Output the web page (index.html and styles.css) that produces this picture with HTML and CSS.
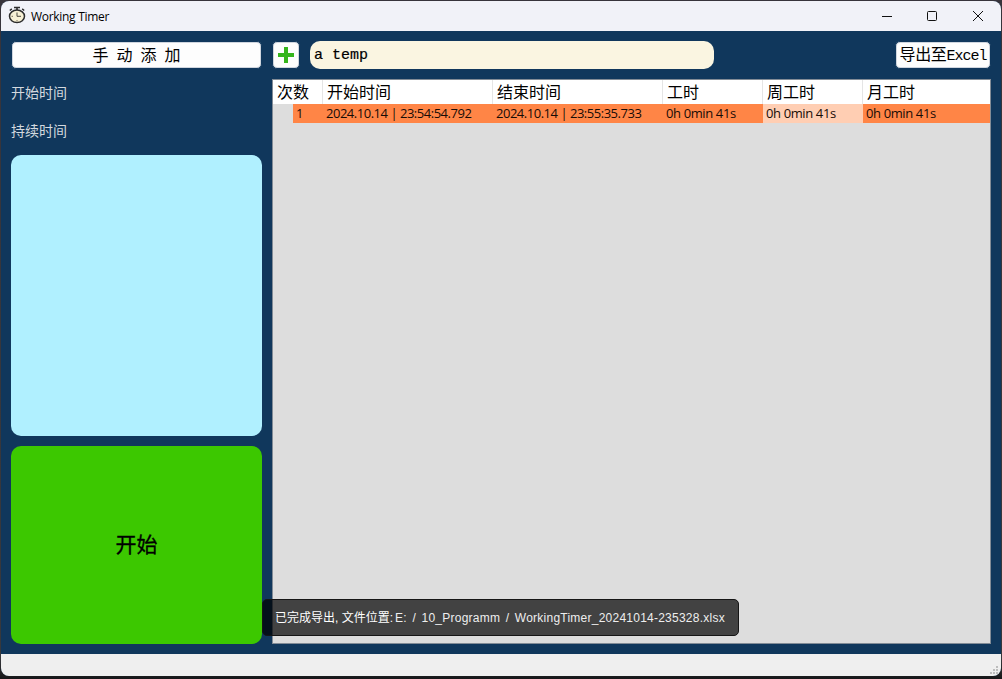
FILE: index.html
```html
<!DOCTYPE html>
<html lang="zh-CN">
<head>
<meta charset="utf-8">
<title>Working Timer</title>
<link rel="stylesheet" href="styles.css">
</head>
<body>
<div class="window">
  <header class="titlebar">
    <svg class="app-icon" width="18" height="18" viewBox="0 0 18 18" fill="none" stroke="#2d2d2d">
      <path d="M6 1.500h6M9 1v3" stroke-width="1.6"/>
      <path d="M1.800 4.500l2-1.600M14.200 2.900l2 1.600" stroke-width="1.5"/>
      <ellipse cx="9" cy="10.300" rx="7.500" ry="6.300" fill="#f8f1d5" stroke-width="1.500"/>
      <path d="M9 6.500v3.800h4" stroke="#4b483f" stroke-width="1"/>
      <path d="M9 14v1M3.500 10.300h1.500" stroke="#77705c" stroke-width="1"/>
    </svg>
    <span class="title">Working Timer</span>
    <svg class="controls" width="104" height="12" viewBox="0 0 104 12" fill="none" stroke="#111">
      <path d="M0 6.5h10"/>
      <rect x="45.5" y="1.5" width="9" height="9" rx="1"/>
      <path d="M91 1l10 10M101 1l-10 10"/>
    </svg>
  </header>
  <main class="content">
    <aside class="sidebar">
      <button class="button add-manual">手 动 添 加</button>
      <div class="label start-label">开始时间</div>
      <div class="label">持续时间</div>
      <div class="display"></div>
      <button class="start">开始</button>
    </aside>
    <section class="records">
      <div class="toolbar">
        <button class="button plus" aria-label="add">
          <svg width="16" height="16" viewBox="0 0 16 16"><path d="M6 0h4v6h6v4h-6v6H6v-6H0V6h6z" fill="#35b51c"/></svg>
        </button>
        <div class="task">a temp</div>
        <button class="button export">导出至<span class="mono">Excel</span></button>
      </div>
      <div class="table">
        <div class="row head">
          <div>次数</div><div>开始时间</div><div>结束时间</div><div>工时</div><div>周工时</div><div>月工时</div>
        </div>
        <div class="row data">
          <div class="index">1</div><div class="date">2024.10.14 | 23:54:54.792</div><div class="date">2024.10.14 | 23:55:35.733</div><div>0h 0min 41s</div><div class="week">0h 0min 41s</div><div>0h 0min 41s</div>
        </div>
      </div>
    </section>
  </main>
  <footer class="statusbar">
    <svg width="8" height="8" viewBox="0 0 8 8" fill="#bdbdbd"><path d="M6 0h2v2H6zM3 3h2v2H3zM6 3h2v2H6zM0 6h2v2H0zM3 6h2v2H3zM6 6h2v2H6z"/></svg>
  </footer>
  <div class="toast"><span class="toast-cn">已完成导出, 文件位置:</span><span class="toast-path">E:&nbsp; /&nbsp; 10_Programm&nbsp; /&nbsp; WorkingTimer_20241014-235328.xlsx</span></div>
</div>
</body>
</html>
```
FILE: styles.css
```css
* { box-sizing: border-box; }
body {
  margin: 0;
  height: 679px;
  padding: 1px 1px 3px;
  background: linear-gradient(#37343b, #37383c 97%, #171718);
  font-family: "Open Sans", "Noto Sans CJK SC", sans-serif;
  color: #000;
  overflow: hidden;
}
button { border: 0; margin: 0; padding: 0; color: #000; font-family: inherit; }
.window {
  position: relative;
  height: 675px;
  display: flex;
  flex-direction: column;
  border-radius: 8px;
  overflow: hidden;
  background: #10375c;
}
.titlebar {
  height: 30px;
  flex: none;
  display: flex;
  align-items: center;
  padding: 0 15px 0 7px;
  background: #f1f2f8;
}
.app-icon { margin-bottom: 2px; }
.title { margin-left: 5px; font-size: 12px; letter-spacing: -0.3px; white-space: nowrap; }
.controls { margin-left: auto; margin-bottom: 1px; }
.content {
  flex: 1;
  min-height: 0;
  display: flex;
  gap: 10px;
  padding: 10px 10px 10px;
}
.sidebar { width: 251px; display: flex; flex-direction: column; }
.button {
  height: 28px;
  background: #fdfdfd;
  border: 1px solid #10375c;
  border-radius: 5px;
  box-shadow: inset 0 0 0 1px #cfd5de;
  font-size: 16px;
  white-space: nowrap;
}
.add-manual { flex: none; word-spacing: 3.9px; line-height: 24px; }
.label {
  height: 20px;
  margin-top: 18px;
  font-size: 14px;
  line-height: 20px;
  color: #d3d9df;
}
.start-label { margin-top: 14px; }
.display { height: 281px; margin-top: 14px; border-radius: 10px; background: #b0f0ff; }
.start {
  height: 198px;
  margin-top: 10px;
  border-radius: 10px;
  background: #3cc800;
  font-size: 21px;
  line-height: 30px;
  padding-bottom: 2px;
  -webkit-text-stroke: 0.3px #000;
}
.records { flex: 1; min-width: 0; display: flex; flex-direction: column; }
.toolbar { display: flex; height: 28px; flex: none; }
.plus { width: 28px; display: flex; align-items: center; justify-content: center; }
.task {
  width: 404px;
  margin-left: 10px;
  padding-left: 4px;
  border-radius: 10px;
  background: #faf5e1;
  font: 15px/30px "Liberation Mono", monospace;
  -webkit-text-stroke: 0.2px #000;
}
.export { width: 96px; margin-left: auto; line-height: 24px; letter-spacing: -0.3px; }
.mono { font-family: "Liberation Mono", monospace; font-size: 15px; letter-spacing: -1px; }
.table {
  flex: 1;
  margin-top: 10px;
  border: 1px solid #828b96;
  background: #ddd;
}
.row { display: grid; grid-template-columns: 50px 170px 170px 100px 100px 1fr; }
.head { height: 24px; background: #fff; font-size: 16px; line-height: 24px; }
.head div { padding-left: 4px; border-right: 1px solid #e5e5e5; }
.head div:last-child { border-right: 0; }
.data { height: 19px; font-size: 13px; line-height: 19px; letter-spacing: -0.38px; color: #180c06; white-space: nowrap; }
.data div { padding-left: 3px; background: #ff8546; }
.data .date { letter-spacing: -0.48px; }
.data .index { margin-left: 20px; }
.data .week { background: #ffceb3; }
.statusbar {
  height: 22px;
  flex: none;
  display: flex;
  justify-content: flex-end;
  align-items: flex-end;
  padding: 0 3px 2px;
  background: #efefef;
}
.toast {
  position: absolute;
  left: 261px;
  top: 598px;
  width: 477px;
  height: 37px;
  padding-left: 12px;
  border: 1px solid #151515;
  border-radius: 5px;
  background: rgba(0, 0, 0, 0.7);
  color: #fff;
  font: 12px/36px "Liberation Sans", "Noto Sans CJK SC", sans-serif;
  white-space: nowrap;
}
.toast-path { margin-left: 2px; color: #eee; letter-spacing: 0.24px; word-spacing: -0.8px; }
```
